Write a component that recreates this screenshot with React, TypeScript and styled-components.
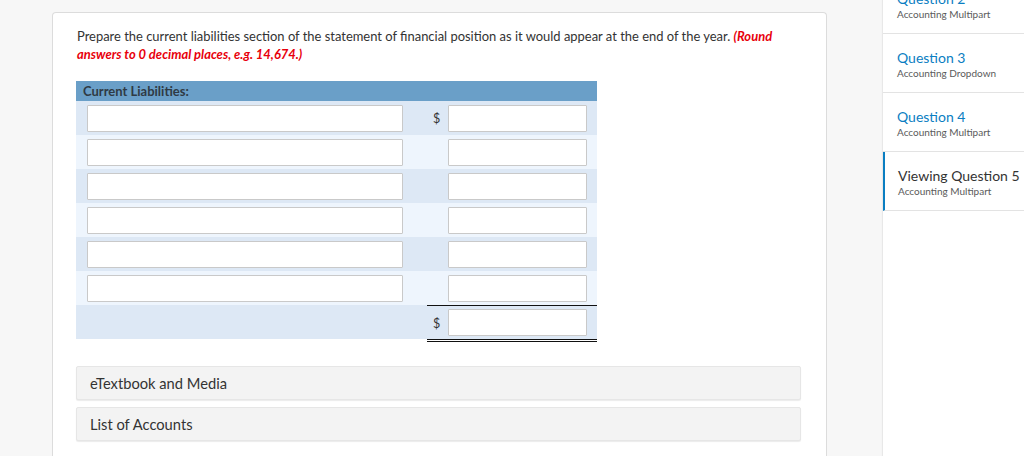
import React from "react";
import styled, { createGlobalStyle } from "styled-components";

const Global = createGlobalStyle`
  html, body { margin: 0; padding: 0; }
  body {
    background: #f7f7f7;
    font-family: Lato, "Open Sans", "Liberation Sans", sans-serif;
    color: #333;
    overflow: hidden;
  }
`;

const Page = styled.div`
  display: flex;
  align-items: flex-start;
  height: 456px;
  overflow: hidden;
`;

const Main = styled.div`
  margin-left: 52px;
  margin-top: 12px;
  width: 775px;
  height: 460px;
  box-sizing: border-box;
  background: #fff;
  border: 1px solid #dcdcdc;
  border-bottom: none;
  border-radius: 4px 4px 0 0;
  padding: 15px 24px 0 23px;
`;

const Prompt = styled.p`
  margin: 0 0 0 1px;
  font-size: 12.95px;
  line-height: 17.5px;
  color: #333;
  width: 705px;
`;

const Hint = styled.span`
  color: #e8000b;
  font-weight: 700;
  font-style: italic;
`;

const Table = styled.div`
  margin-top: 18px;
  width: 521px;
`;

const Header = styled.div`
  height: 20px;
  background: #6a9fc8;
  font-size: 13px;
  font-weight: 700;
  color: #2f3a44;
  padding-left: 7px;
  display: flex;
  align-items: center;
`;

const Row = styled.div<{ $alt?: boolean }>`
  display: grid;
  grid-template-columns: 351px 21px 149px;
  height: 34px;
  background: ${(p) => (p.$alt ? "#eef5fd" : "#dde8f5")};
`;

const Cell = styled.div<{ $total?: boolean; $pad?: string }>`
  display: flex;
  align-items: center;
  box-sizing: border-box;
  padding: ${(p) => p.$pad || "0"};
  border-top: ${(p) => (p.$total ? "1px solid #111" : "none")};
  border-bottom: ${(p) => (p.$total ? "3px double #111" : "none")};
  height: ${(p) => (p.$total ? "37px" : "34px")};
`;

const Dollar = styled.span`
  font-size: 12.5px;
  color: #333;
  margin-left: 6px;
  margin-top: 1px;
`;

const Input = styled.div<{ $w: number }>`
  width: ${(p) => p.$w}px;
  height: 27px;
  box-sizing: border-box;
  background: #fff;
  border: 1px solid #c9c9c9;
  border-radius: 1px;
`;

const Accordion = styled.div`
  margin-top: 27px;
  display: flex;
  flex-direction: column;
  gap: 7px;
  width: 725px;
`;

const Panel = styled.div`
  height: 34px;
  box-sizing: border-box;
  background: #f3f3f3;
  border: 1px solid #e6e6e6;
  border-radius: 2px;
  box-shadow: 0 1px 1px rgba(0, 0, 0, 0.08);
  display: flex;
  align-items: center;
  padding-left: 13px;
  font-size: 14.7px;
  color: #333;
`;

const Sidebar = styled.div`
  margin-left: 56px;
  width: 141px;
  height: 456px;
  background: #fff;
  box-shadow: -1px 0 1px rgba(0, 0, 0, 0.06);
  overflow: hidden;
`;

const List = styled.div`
  margin-top: -25px;
`;

const Item = styled.div<{ $active?: boolean }>`
  height: 59px;
  box-sizing: border-box;
  border-bottom: 1px solid #e3e3e3;
  border-left: ${(p) => (p.$active ? "2px solid #0a7ec2" : "none")};
  padding: ${(p) => (p.$active ? "15px 0 0 13px" : "15px 0 0 14px")};
  display: flex;
  flex-direction: column;
`;

const ItemTitle = styled.div<{ $active?: boolean }>`
  font-size: 14px;
  line-height: 17px;
  color: ${(p) => (p.$active ? "#333" : "#0a7ec2")};
  white-space: nowrap;
`;

const ItemSub = styled.div`
  font-size: 10px;
  line-height: 14px;
  color: #5a5a5a;
  white-space: nowrap;
`;

const rows = [0, 1, 2, 3, 4, 5];

export default function App() {
  return (
    <>
      <Global />
      <Page>
        <Main>
          <Prompt>
            Prepare the current liabilities section of the statement of financial position as it would appear at the end of the year.{" "}
            <Hint>(Round answers to 0 decimal places, e.g. 14,674.)</Hint>
          </Prompt>
          <Table>
            <Header>Current Liabilities:</Header>
            {rows.map((i) => (
              <Row key={i} $alt={i % 2 === 1}>
                <Cell $pad="0 0 0 11px">
                  <Input $w={316} />
                </Cell>
                <Cell>{i === 0 && <Dollar>$</Dollar>}</Cell>
                <Cell>
                  <Input $w={139} />
                </Cell>
              </Row>
            ))}
            <Row>
              <Cell />
              <Cell $total>
                <Dollar>$</Dollar>
              </Cell>
              <Cell $total>
                <Input $w={139} />
              </Cell>
            </Row>
          </Table>
          <Accordion>
            <Panel>eTextbook and Media</Panel>
            <Panel>List of Accounts</Panel>
          </Accordion>
        </Main>
        <Sidebar>
          <List>
            <Item>
              <ItemTitle>Question 2</ItemTitle>
              <ItemSub>Accounting Multipart</ItemSub>
            </Item>
            <Item>
              <ItemTitle>Question 3</ItemTitle>
              <ItemSub>Accounting Dropdown</ItemSub>
            </Item>
            <Item>
              <ItemTitle>Question 4</ItemTitle>
              <ItemSub>Accounting Multipart</ItemSub>
            </Item>
            <Item $active>
              <ItemTitle $active>Viewing Question 5</ItemTitle>
              <ItemSub>Accounting Multipart</ItemSub>
            </Item>
          </List>
        </Sidebar>
      </Page>
    </>
  );
}
